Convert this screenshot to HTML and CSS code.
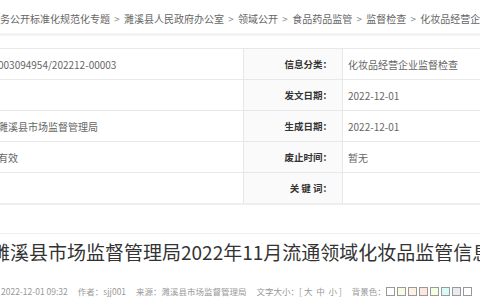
FILE: index.html
```
<!DOCTYPE html>
<html lang="zh-CN">
<head>
<meta charset="UTF-8">
<meta name="viewport" content="width=device-width, initial-scale=1.0">
<title>濉溪县市场监督管理局2022年11月流通领域化妆品监管信息公示</title>
<link rel="stylesheet" href="styles.css">
</head>
<body>

<div class="page">
    <div class="crumb">
        务公开标准化规范化专题 <span class="sep">&gt;</span> 濉溪县人民政府办公室 <span class="sep">&gt;</span> 领域公开 <span class="sep">&gt;</span> 食品药品监管 <span class="sep">&gt;</span> 监督检查 <span class="sep">&gt;</span> 化妆品经营企业监督检查
    </div>
    <div class="crumb-line"></div>

    <table class="info">
        <tr>
            <td class="val first">003094954/202212-00003</td>
            <th>信息分类：</th>
            <td class="val">化妆品经营企业监督检查</td>
        </tr>
        <tr>
            <td class="val first"></td>
            <th>发文日期：</th>
            <td class="val">2022-12-01</td>
        </tr>
        <tr>
            <td class="val first">濉溪县市场监督管理局</td>
            <th>生成日期：</th>
            <td class="val">2022-12-01</td>
        </tr>
        <tr>
            <td class="val first">有效</td>
            <th>废止时间：</th>
            <td class="val">暂无</td>
        </tr>
        <tr>
            <td class="val first"></td>
            <th>关 键 词：</th>
            <td class="val"></td>
        </tr>
    </table>

    <div class="title-line"></div>
    <h1 class="title">濉溪县市场监督管理局2022年11月流通领域化妆品监管信息公示</h1>

    <div class="meta">
        <span>2022-12-01 09:32</span>
        <span>作者：sjj001</span>
        <span>来源：濉溪县市场监督管理局</span>
        <span>文字大小：[ 大&nbsp; 中&nbsp; 小 ]</span>
        <span class="bg">背景色：
            <i class="sw" style="background:#ffffff"></i><i class="sw" style="background:#fafbe6"></i><i class="sw" style="background:#fff2e2"></i><i class="sw" style="background:#fde6e0"></i><i class="sw" style="background:#f3ffe1"></i><i class="sw" style="background:#dafaf8"></i><i class="sw" style="background:#eaeaef"></i><i class="sw" style="background:#ffffff"></i>
        </span>
    </div>
</div>

</body>
</html>
```

FILE: styles.css
```
body {
    margin: 0;
    background-color: #fff;
    font-family: "Noto Sans CJK SC", "Noto Sans", sans-serif;
    overflow: hidden;
}
.page {
    width: 480px;
}
.crumb {
    height: 33px;
    box-sizing: border-box;
    padding-top: 13px;
    font-size: 10px;
    line-height: 12px;
    color: #666;
    white-space: nowrap;
}
.crumb .sep {
    color: #888;
    margin: 0 2px;
}
.crumb-line {
    height: 3px;
    background-color: #f3f3f3;
    margin-bottom: 12px;
}
.info {
    width: 500px;
    margin-left: -10px;
    border-collapse: collapse;
    border-top: 1px solid #e8e8e8;
    border-bottom: 2px solid #eeeeee;
}
.info td,
.info th {
    height: 30px;
    padding: 0;
    border-bottom: 1px solid #e8e8e8;
    white-space: nowrap;
}
.info tr:last-child td,
.info tr:last-child th {
    border-bottom: none;
}
.info .val {
    font-size: 10px;
    color: #666;
    padding-left: 5px;
}
.info .first {
    width: 245px;
    padding-left: 8px;
    border-right: 1px solid #e8e8e8;
}
.info th {
    width: 88px;
    padding-right: 10px;
    text-align: right;
    font-size: 9.5px;
    font-weight: bold;
    color: #333;
    background-color: #fafafa;
    border-right: 1px solid #e8e8e8;
}
.title-line {
    height: 1px;
    background-color: #eeeeee;
    margin-top: 28px;
}
.title {
    margin: 4px 0 0 -9px;
    font-size: 19px;
    line-height: 28px;
    font-weight: normal;
    color: #333;
    white-space: nowrap;
}
.meta {
    display: flex;
    gap: 10px;
    margin-top: 19px;
    padding-left: 1px;
    font-size: 8.5px;
    line-height: 12px;
    color: #999;
    white-space: nowrap;
}
.meta .bg {
    display: flex;
    align-items: center;
}
.sw {
    display: inline-block;
    width: 9px;
    height: 9px;
    margin-right: 2px;
    border: 1px solid #999;
    box-sizing: border-box;
}
```
